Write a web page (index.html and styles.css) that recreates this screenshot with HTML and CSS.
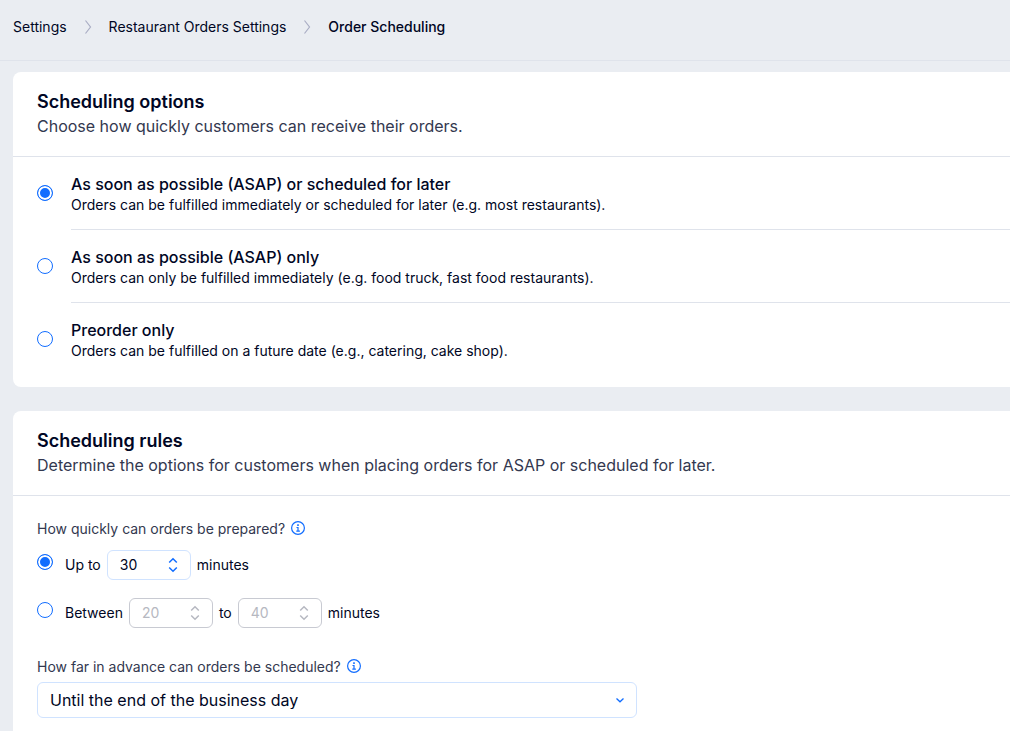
FILE: index.html
```html
<!DOCTYPE html>
<html lang="en">
<head>
  <meta charset="UTF-8">
  <meta name="viewport" content="width=device-width, initial-scale=1">
  <title>Order Scheduling</title>
  <link rel="stylesheet" href="styles.css">
</head>
<body>
  <header class="page-header">
    <nav class="breadcrumbs" aria-label="Breadcrumb">
      <a href="#settings">Settings</a>
      <svg class="crumb-arrow" width="8" height="16" viewBox="0 0 8 16"><path d="M1.5 1.5L6.5 8L1.5 14.5"/></svg>
      <a href="#orders">Restaurant Orders Settings</a>
      <svg class="crumb-arrow" width="8" height="16" viewBox="0 0 8 16"><path d="M1.5 1.5L6.5 8L1.5 14.5"/></svg>
      <a href="#scheduling" class="current" aria-current="page">Order Scheduling</a>
    </nav>
  </header>

  <main class="content">
    <section class="card">
      <div class="card-header">
        <h2>Scheduling options</h2>
        <p>Choose how quickly customers can receive their orders.</p>
      </div>
      <div class="options">
        <label class="option">
          <input type="radio" name="mode" class="radio" checked>
          <span class="option-text">
            <span class="option-title">As soon as possible (ASAP) or scheduled for later</span>
            <span class="option-desc">Orders can be fulfilled immediately or scheduled for later (e.g. most restaurants).</span>
          </span>
        </label>
        <label class="option">
          <input type="radio" name="mode" class="radio">
          <span class="option-text">
            <span class="option-title">As soon as possible (ASAP) only</span>
            <span class="option-desc">Orders can only be fulfilled immediately (e.g. food truck, fast food restaurants).</span>
          </span>
        </label>
        <label class="option">
          <input type="radio" name="mode" class="radio">
          <span class="option-text">
            <span class="option-title">Preorder only</span>
            <span class="option-desc">Orders can be fulfilled on a future date (e.g., catering, cake shop).</span>
          </span>
        </label>
      </div>
    </section>

    <section class="card">
      <div class="card-header">
        <h2>Scheduling rules</h2>
        <p>Determine the options for customers when placing orders for ASAP or scheduled for later.</p>
      </div>
      <div class="card-body">
        <div class="field" role="group" aria-labelledby="prep-label">
          <div class="field-label">
            <span id="prep-label">How quickly can orders be prepared?</span>
            <svg class="info" width="14" height="14" viewBox="0 0 14 14"><circle cx="7" cy="7" r="6.4"/><path d="M5.5 6.5H7V10M5.3 10.2H8.9"/><path class="dot" d="M6.2 3.3H7.8V4.9H6.2Z"/></svg>
          </div>
          <div class="time-row">
            <input type="radio" name="prep" class="radio" id="up-to" checked>
            <label for="up-to">Up to</label>
            <span class="stepper">
              <input type="number" value="30" aria-label="Up to minutes">
              <svg width="10" height="16" viewBox="0 0 10 16"><path d="M1.2 5.5L5 1.7L8.8 5.5M1.2 10.5L5 14.3L8.8 10.5"/></svg>
            </span>
            <span>minutes</span>
          </div>
          <div class="time-row">
            <input type="radio" name="prep" class="radio" id="between">
            <label for="between">Between</label>
            <span class="stepper disabled">
              <input type="number" value="20" aria-label="Minimum minutes" disabled>
              <svg width="10" height="16" viewBox="0 0 10 16"><path d="M1.2 5.5L5 1.7L8.8 5.5M1.2 10.5L5 14.3L8.8 10.5"/></svg>
            </span>
            <span>to</span>
            <span class="stepper disabled">
              <input type="number" value="40" aria-label="Maximum minutes" disabled>
              <svg width="10" height="16" viewBox="0 0 10 16"><path d="M1.2 5.5L5 1.7L8.8 5.5M1.2 10.5L5 14.3L8.8 10.5"/></svg>
            </span>
            <span>minutes</span>
          </div>
        </div>

        <div class="field">
          <div class="field-label">
            <label for="advance">How far in advance can orders be scheduled?</label>
            <svg class="info" width="14" height="14" viewBox="0 0 14 14"><circle cx="7" cy="7" r="6.4"/><path d="M5.5 6.5H7V10M5.3 10.2H8.9"/><path class="dot" d="M6.2 3.3H7.8V4.9H6.2Z"/></svg>
          </div>
          <div class="select-wrap">
            <select id="advance">
              <option>Until the end of the business day</option>
            </select>
            <svg class="chevron" width="10" height="8" viewBox="0 0 10 8"><path d="M1.5 2.5L5 5.8L8.5 2.5"/></svg>
          </div>
        </div>
      </div>
    </section>
  </main>
</body>
</html>
```

FILE: styles.css
```css
* {
  box-sizing: border-box;
}

body {
  display: flex;
  flex-direction: column;
  height: 100vh;
  margin: 0;
  overflow: hidden;
  font-family: Inter, "Noto Sans", sans-serif;
  font-size: 14px;
  line-height: 18px;
  color: #000624;
  background-color: #eaedf2;
}

h2,
p {
  margin: 0;
}

.page-header {
  flex: none;
  padding: 15px 13px 21px;
  border-bottom: 1px solid #dfe3eb;
}

.breadcrumbs {
  display: flex;
  align-items: center;
  gap: 17px;
  line-height: 24px;
}

.breadcrumbs a {
  color: inherit;
  text-decoration: none;
}

.breadcrumbs .current {
  font-weight: 500;
}

svg {
  flex: none;
  fill: none;
}

.crumb-arrow {
  stroke: #a9adc4;
  stroke-width: 1.2;
}

.content {
  display: flex;
  flex: 1;
  flex-direction: column;
  gap: 24px;
  min-height: 0;
  padding: 11px 0 0 13px;
  overflow: hidden;
}

.card {
  flex: none;
  background-color: #fff;
  border-radius: 8px 0 0 8px;
}

.card-header {
  padding: 18px 24px;
  border-bottom: 1px solid #dfe3eb;
}

.card-header h2 {
  font-size: 18px;
  font-weight: 600;
  line-height: 24px;
}

.card-header p {
  font-size: 16px;
  line-height: 24px;
  color: #33384f;
}

.options {
  padding: 0 0 12px 24px;
}

.option {
  display: flex;
  gap: 18px;
}

.option-text {
  display: flex;
  flex: 1;
  flex-direction: column;
  padding: 15px 0;
  border-bottom: 1px solid #dfe3eb;
}

.option:last-child .option-text {
  border-bottom: none;
}

.option-title {
  font-size: 16px;
  font-weight: 500;
  line-height: 24px;
}

.radio {
  flex: none;
  width: 16px;
  height: 16px;
  margin: 0;
  appearance: none;
  background-color: #fff;
  border: 1px solid #116dff;
  border-radius: 50%;
}

.radio:checked {
  background-color: #116dff;
  box-shadow: inset 0 0 0 2px #fff;
}

.option .radio {
  margin-top: 28px;
}

.card-body {
  display: flex;
  flex-direction: column;
  gap: 30px;
  padding: 24px;
}

.field-label {
  display: flex;
  gap: 6px;
  color: #33384f;
}

.info {
  margin-top: 1px;
  stroke: #116dff;
  stroke-width: 1.2;
}

.info .dot {
  fill: #116dff;
  stroke: none;
}

.time-row {
  display: flex;
  align-items: center;
  gap: 6px;
  margin-top: 12px;
}

.time-row + .time-row {
  margin-top: 18px;
}

.time-row .radio {
  align-self: flex-start;
  margin: 4px 6px 0 0;
}

.stepper {
  display: flex;
  align-items: center;
  width: 84px;
  height: 30px;
  padding: 0 12px;
  border: 1px solid #d0e3ff;
  border-radius: 6px;
  stroke: #116dff;
  stroke-width: 1.5;
}

.stepper input {
  flex: 1;
  min-width: 0;
  padding: 0;
  font: inherit;
  color: inherit;
  background: none;
  border: none;
  outline: none;
  appearance: textfield;
}

.stepper input::-webkit-inner-spin-button {
  appearance: none;
  margin: 0;
}

.stepper.disabled {
  color: #b6b8c1;
  border-color: #c8cad2;
  stroke: #b6b8c1;
}

.select-wrap {
  display: grid;
  align-items: center;
  max-width: 600px;
  margin-top: 6px;
}

.select-wrap select,
.select-wrap .chevron {
  grid-area: 1 / 1;
}

.select-wrap select {
  width: 100%;
  height: 36px;
  padding: 0 36px 0 12px;
  font: inherit;
  font-size: 16px;
  color: inherit;
  appearance: none;
  background-color: #fff;
  border: 1px solid #d0e3ff;
  border-radius: 6px;
}

.chevron {
  z-index: 1;
  justify-self: end;
  margin-right: 12px;
  pointer-events: none;
  stroke: #116dff;
  stroke-width: 1.3;
}
```
